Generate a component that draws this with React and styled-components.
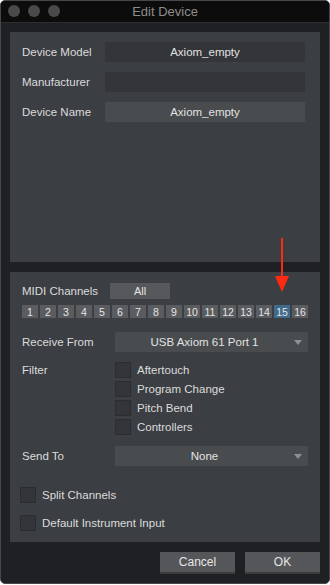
import React, { useState } from "react";
import styled, { createGlobalStyle } from "styled-components";

const GlobalStyle = createGlobalStyle`
  html, body {
    margin: 0;
    padding: 0;
    background: #ffffff;
  }
  body {
    font-family: "Liberation Sans", Arial, sans-serif;
  }
`;

const channels = Array.from({ length: 16 }, (_, i) => i + 1);
const filters = ["Aftertouch", "Program Change", "Pitch Bend", "Controllers"];

const App = () => {
  const [active, setActive] = useState(15);
  const [checked, setChecked] = useState({});

  const toggle = (key) => setChecked((prev) => ({ ...prev, [key]: !prev[key] }));

  return (
    <>
      <GlobalStyle />
      <Window>
        <TitleBar>
          <Lights>
            <Light />
            <Light />
            <Light />
          </Lights>
          <Title>Edit Device</Title>
        </TitleBar>
        <Body>
          <TopPanel>
            <FieldRow>
              <Label>Device Model</Label>
              <TextField $tone="dark">Axiom_empty</TextField>
            </FieldRow>
            <FieldRow>
              <Label>Manufacturer</Label>
              <TextField $tone="dark" />
            </FieldRow>
            <FieldRow>
              <Label>Device Name</Label>
              <TextField $tone="light">Axiom_empty</TextField>
            </FieldRow>
          </TopPanel>

          <BottomPanel>
            <Arrow width="16" height="54" viewBox="0 0 16 54">
              <rect x="7" y="0" width="2" height="40" fill="#ff2a12" />
              <polygon points="1,38 15,38 8,54" fill="#ff2a12" />
            </Arrow>

            <MidiRow>
              <Label>MIDI Channels</Label>
              <AllButton>All</AllButton>
            </MidiRow>
            <ChannelRow>
              {channels.map((n) => (
                <Channel key={n} $active={n === active} onClick={() => setActive(n)}>
                  {n}
                </Channel>
              ))}
            </ChannelRow>

            <SelectRow $top={14}>
              <Label $wide>Receive From</Label>
              <Select>
                USB Axiom 61 Port 1
                <Caret />
              </Select>
            </SelectRow>

            <FilterRow>
              <Label $wide>Filter</Label>
              <CheckList>
                {filters.map((f) => (
                  <CheckItem key={f} onClick={() => toggle(f)}>
                    <Box $on={checked[f]} />
                    <span>{f}</span>
                  </CheckItem>
                ))}
              </CheckList>
            </FilterRow>

            <SelectRow $top={11}>
              <Label $wide>Send To</Label>
              <Select>
                None
                <Caret />
              </Select>
            </SelectRow>

            <OptionList>
              <CheckItem onClick={() => toggle("split")}>
                <Box $on={checked.split} />
                <span>Split Channels</span>
              </CheckItem>
              <CheckItem onClick={() => toggle("default")}>
                <Box $on={checked.default} />
                <span>Default Instrument Input</span>
              </CheckItem>
            </OptionList>
          </BottomPanel>

          <Footer>
            <DialogButton>Cancel</DialogButton>
            <DialogButton>OK</DialogButton>
          </Footer>
        </Body>
      </Window>
    </>
  );
};

export default App;

const Window = styled.div`
  width: 330px;
  height: 584px;
  box-sizing: border-box;
  border: 1px solid #45474b;
  border-radius: 5px;
  overflow: hidden;
  background: #1f2023;
  display: flex;
  flex-direction: column;
`;

const TitleBar = styled.div`
  height: 21px;
  background: #0c0c0d;
  position: relative;
  display: flex;
  align-items: center;
  justify-content: center;
`;

const Lights = styled.div`
  position: absolute;
  left: 7px;
  top: 4px;
  display: flex;
  gap: 8px;
`;

const Light = styled.span`
  width: 12px;
  height: 12px;
  border-radius: 50%;
  background: #4a4a4b;
`;

const Title = styled.div`
  color: #8c8c8c;
  font-size: 13px;
`;

const Body = styled.div`
  flex: 1;
  border-top: 1px solid #2c2e32;
  padding: 9px 9px 0 9px;
  display: flex;
  flex-direction: column;
`;

const TopPanel = styled.div`
  height: 230px;
  background: #3b3e42;
  padding: 10px 12px;
  box-sizing: border-box;
  display: flex;
  flex-direction: column;
  gap: 10px;
`;

const FieldRow = styled.div`
  display: flex;
  align-items: center;
  height: 20px;
`;

const Label = styled.div`
  width: ${(p) => (p.$wide ? "93px" : "83px")};
  flex-shrink: 0;
  color: #dcdcdc;
  font-size: 11.5px;
  white-space: nowrap;
`;

const TextField = styled.div`
  width: 200px;
  height: 20px;
  background: ${(p) => (p.$tone === "light" ? "#494c4f" : "#333538")};
  color: #e2e2e2;
  font-size: 11.5px;
  display: flex;
  align-items: center;
  justify-content: center;
`;

const BottomPanel = styled.div`
  position: relative;
  margin-top: 10px;
  height: 270px;
  box-sizing: border-box;
  background: #3b3e42;
  padding: 10px 12px 0 12px;
`;

const Arrow = styled.svg`
  position: absolute;
  left: 264px;
  top: -34px;
`;

const MidiRow = styled.div`
  display: flex;
  align-items: center;
  height: 16px;
  margin-top: 1px;
`;

const AllButton = styled.div`
  width: 60px;
  height: 16px;
  margin-left: 5px;
  background: #56585b;
  color: #e6e6e6;
  font-size: 11px;
  display: flex;
  align-items: center;
  justify-content: center;
`;

const ChannelRow = styled.div`
  display: flex;
  gap: 2px;
  margin-top: 6px;
`;

const Channel = styled.div`
  width: 16px;
  height: 13px;
  background: ${(p) => (p.$active ? "#406a8e" : "#5a5c5f")};
  color: #e4e4e4;
  font-size: 10.5px;
  display: flex;
  align-items: center;
  justify-content: center;
  cursor: pointer;
`;

const SelectRow = styled.div`
  display: flex;
  align-items: center;
  margin-top: ${(p) => p.$top}px;
`;

const Select = styled.div`
  position: relative;
  width: 193px;
  height: 20px;
  box-sizing: border-box;
  padding-right: 14px;
  background: #494c4f;
  color: #e2e2e2;
  font-size: 11.5px;
  display: flex;
  align-items: center;
  justify-content: center;
`;

const Caret = styled.span`
  position: absolute;
  right: 6px;
  top: 8px;
  width: 0;
  height: 0;
  border-left: 4px solid transparent;
  border-right: 4px solid transparent;
  border-top: 5px solid #8e9093;
`;

const FilterRow = styled.div`
  display: flex;
  align-items: flex-start;
  margin-top: 10px;

  & > ${Label} {
    line-height: 16px;
  }
`;

const CheckList = styled.div`
  display: flex;
  flex-direction: column;
  gap: 3px;
`;

const CheckItem = styled.label`
  display: flex;
  align-items: center;
  gap: 6px;
  height: 16px;
  color: #dcdcdc;
  font-size: 11.5px;
  cursor: pointer;
`;

const Box = styled.span`
  width: 16px;
  height: 16px;
  box-sizing: border-box;
  border: 1px solid #2b2d30;
  background: ${(p) => (p.$on ? "#406a8e" : "#333538")};
`;

const OptionList = styled.div`
  display: flex;
  flex-direction: column;
  gap: 12px;
  margin-top: 21px;
  margin-left: -2px;
`;

const Footer = styled.div`
  display: flex;
  justify-content: flex-end;
  gap: 10px;
  padding-top: 10px;
`;

const DialogButton = styled.div`
  width: 75px;
  height: 22px;
  box-sizing: border-box;
  background: #555659;
  border-bottom: 2px solid #3a3b3d;
  color: #e6e6e6;
  font-size: 12px;
  display: flex;
  align-items: center;
  justify-content: center;
`;
